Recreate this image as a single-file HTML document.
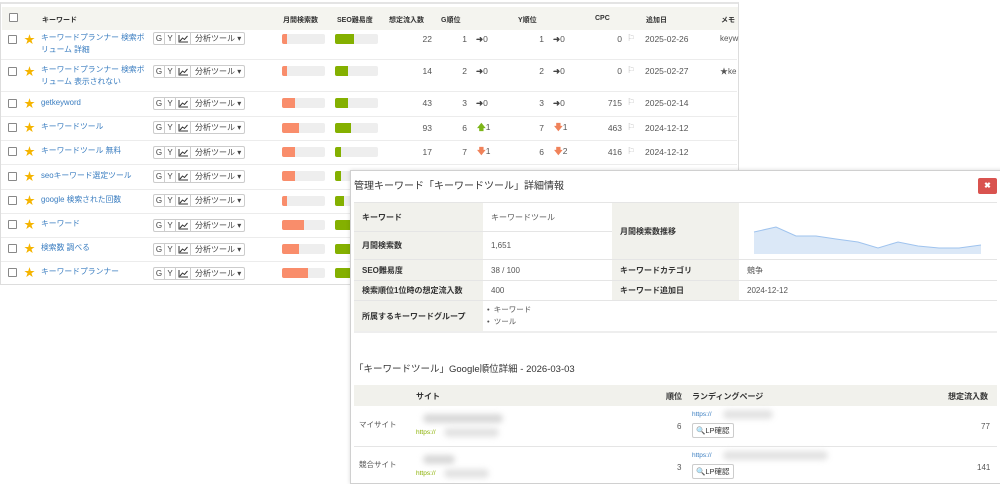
<!DOCTYPE html>
<html><head><meta charset="utf-8"><style>
*{box-sizing:border-box;margin:0;padding:0}
body{width:1000px;height:484px;background:#fff;position:relative;overflow:hidden;font-family:"Liberation Sans","Noto Sans CJK JP",sans-serif;font-size:8px;color:#555}
.a{position:absolute;white-space:nowrap}
.lp{position:absolute;left:0;top:2px;width:739px;height:283px;border:1px solid #ddd;border-top:2px solid #e4e4e4;background:#fff}
.hd{position:absolute;left:1px;top:3px;width:736px;height:23px;background:#f4f4ef}
.hd span{position:absolute;top:8px;font-size:7px;font-weight:bold;color:#333}
.row{position:absolute;left:1px;width:736px;border-bottom:1px solid #ececec}
.cb{position:absolute;left:8px;width:9px;height:9px;border:1px solid #888;border-radius:1px;background:#fff}
.st{position:absolute;left:24px;color:#f5b400;font-size:11px}
.kw{position:absolute;left:41px;color:#3a7dc0;font-size:7.8px;line-height:12px}
.btn{position:absolute;left:153px;height:13px;width:92px;border:1px solid #ccc;border-radius:2px;font-size:8px;color:#444;display:flex}
.btn i{font-style:normal;border-right:1px solid #ccc;display:block;text-align:center;line-height:11px}
.btn svg{display:block;margin:2px auto 0}
.bar{position:absolute;height:10px;width:43px;background:#eee;border-radius:2px;overflow:hidden}
.bar b{display:block;height:100%}
.n{position:absolute;text-align:right;width:40px;color:#555;font-size:8.5px}
.fl{position:absolute;left:627px;color:#bbb;font-size:9px}
.modal{position:absolute;left:350px;top:170px;width:660px;height:314px;background:#fff;border:1px solid #d0d0d0;box-shadow:0 0 4px rgba(0,0,0,.15)}
.lbl{position:absolute;background:#f1f1ec;font-weight:bold;color:#333;font-size:8px;padding-left:8px;display:flex;align-items:center}
.val{position:absolute;color:#555;font-size:8px;padding-left:8px;display:flex;align-items:center}
.blur{position:absolute;background:#d8d8d8;filter:blur(3px);border-radius:6px}
.lpb{position:absolute;border:1px solid #ccc;border-radius:2px;font-size:7.5px;color:#333;padding:1px 3px;background:#fff}
</style></head><body>
<div class="lp">
<div class="hd">
<div class="cb" style="top:6px;left:7px"></div>
<span style="left:40px">キーワード</span>
<span style="left:281px">月間検索数</span>
<span style="left:335px">SEO難易度</span>
<span style="left:387px">想定流入数</span>
<span style="left:439px">G順位</span>
<span style="left:516px">Y順位</span>
<span style="left:593px">CPC</span>
<span style="left:644px">追加日</span>
<span style="left:719px">メモ</span>
</div>
</div>

<div class="row" style="top:28px;height:32px"></div>
<div class="cb" style="top:35px"></div><div class="st" style="top:31px">★</div>
<div class="kw" style="top:32px">キーワードプランナー 検索ボ<br>リューム 詳細</div>
<div class="btn" style="top:32px"><i style="width:11px">G</i><i style="width:11px">Y</i><i style="width:15px"><svg width="10" height="8"><path d="M1 0V7H10M2 6L4.5 3 6.5 4.5 9.5 1" fill="none" stroke="#333" stroke-width="1"/></svg></i><span style="padding-left:4px;line-height:11px">分析ツール ▾</span></div>
<div class="bar" style="left:282px;top:34px"><b style="width:5px;background:#f98d6b"></b></div>
<div class="bar" style="left:335px;top:34px"><b style="width:19px;background:#84b000"></b></div>
<div class="n" style="left:392px;top:34px">22</div><div class="n" style="left:427px;top:34px">1</div><div class="a" style="left:476px;top:34px;font-size:8.5px"><b style="color:#444">➜</b>0</div>
<div class="n" style="left:504px;top:34px">1</div><div class="a" style="left:553px;top:34px;font-size:8.5px"><b style="color:#444">➜</b>0</div>
<div class="n" style="left:582px;top:34px">0</div><div class="fl" style="top:33px">⚐</div><div class="a" style="left:645px;top:34px;font-size:8.5px">2025-02-26</div><div class="a" style="left:720px;top:34px">keyw</div>

<div class="row" style="top:60px;height:32px"></div>
<div class="cb" style="top:67px"></div><div class="st" style="top:63px">★</div>
<div class="kw" style="top:64px">キーワードプランナー 検索ボ<br>リューム 表示されない</div>
<div class="btn" style="top:65px"><i style="width:11px">G</i><i style="width:11px">Y</i><i style="width:15px"><svg width="10" height="8"><path d="M1 0V7H10M2 6L4.5 3 6.5 4.5 9.5 1" fill="none" stroke="#333" stroke-width="1"/></svg></i><span style="padding-left:4px;line-height:11px">分析ツール ▾</span></div>
<div class="bar" style="left:282px;top:66px"><b style="width:5px;background:#f98d6b"></b></div>
<div class="bar" style="left:335px;top:66px"><b style="width:13px;background:#84b000"></b></div>
<div class="n" style="left:392px;top:66px">14</div><div class="n" style="left:427px;top:66px">2</div><div class="a" style="left:476px;top:66px;font-size:8.5px"><b style="color:#444">➜</b>0</div>
<div class="n" style="left:504px;top:66px">2</div><div class="a" style="left:553px;top:66px;font-size:8.5px"><b style="color:#444">➜</b>0</div>
<div class="n" style="left:582px;top:66px">0</div><div class="fl" style="top:65px">⚐</div><div class="a" style="left:645px;top:66px;font-size:8.5px">2025-02-27</div><div class="a" style="left:720px;top:66px">★ke</div>

<div class="row" style="top:92px;height:25px"></div>
<div class="cb" style="top:99px"></div><div class="st" style="top:95px">★</div>
<div class="kw" style="top:97px">getkeyword</div>
<div class="btn" style="top:97px"><i style="width:11px">G</i><i style="width:11px">Y</i><i style="width:15px"><svg width="10" height="8"><path d="M1 0V7H10M2 6L4.5 3 6.5 4.5 9.5 1" fill="none" stroke="#333" stroke-width="1"/></svg></i><span style="padding-left:4px;line-height:11px">分析ツール ▾</span></div>
<div class="bar" style="left:282px;top:98px"><b style="width:13px;background:#f98d6b"></b></div>
<div class="bar" style="left:335px;top:98px"><b style="width:13px;background:#84b000"></b></div>
<div class="n" style="left:392px;top:98px">43</div><div class="n" style="left:427px;top:98px">3</div><div class="a" style="left:476px;top:98px;font-size:8.5px"><b style="color:#444">➜</b>0</div>
<div class="n" style="left:504px;top:98px">3</div><div class="a" style="left:553px;top:98px;font-size:8.5px"><b style="color:#444">➜</b>0</div>
<div class="n" style="left:582px;top:98px">715</div><div class="fl" style="top:97px">⚐</div><div class="a" style="left:645px;top:98px;font-size:8.5px">2025-02-14</div>

<div class="row" style="top:117px;height:24px"></div>
<div class="cb" style="top:123px"></div><div class="st" style="top:119px">★</div>
<div class="kw" style="top:121px">キーワードツール</div>
<div class="btn" style="top:121px"><i style="width:11px">G</i><i style="width:11px">Y</i><i style="width:15px"><svg width="10" height="8"><path d="M1 0V7H10M2 6L4.5 3 6.5 4.5 9.5 1" fill="none" stroke="#333" stroke-width="1"/></svg></i><span style="padding-left:4px;line-height:11px">分析ツール ▾</span></div>
<div class="bar" style="left:282px;top:123px"><b style="width:17px;background:#f98d6b"></b></div>
<div class="bar" style="left:335px;top:123px"><b style="width:16px;background:#84b000"></b></div>
<div class="n" style="left:392px;top:123px">93</div><div class="n" style="left:427px;top:123px">6</div><div class="a" style="left:477px;top:122px;font-size:8.5px"><b style="color:#7cb518">🡅</b>1</div>
<div class="n" style="left:504px;top:123px">7</div><div class="a" style="left:554px;top:122px;font-size:8.5px"><b style="color:#f0825a">🡇</b>1</div>
<div class="n" style="left:582px;top:123px">463</div><div class="fl" style="top:122px">⚐</div><div class="a" style="left:645px;top:123px;font-size:8.5px">2024-12-12</div>

<div class="row" style="top:141px;height:24px"></div>
<div class="cb" style="top:147px"></div><div class="st" style="top:143px">★</div>
<div class="kw" style="top:145px">キーワードツール 無料</div>
<div class="btn" style="top:146px"><i style="width:11px">G</i><i style="width:11px">Y</i><i style="width:15px"><svg width="10" height="8"><path d="M1 0V7H10M2 6L4.5 3 6.5 4.5 9.5 1" fill="none" stroke="#333" stroke-width="1"/></svg></i><span style="padding-left:4px;line-height:11px">分析ツール ▾</span></div>
<div class="bar" style="left:282px;top:147px"><b style="width:13px;background:#f98d6b"></b></div>
<div class="bar" style="left:335px;top:147px"><b style="width:6px;background:#84b000"></b></div>
<div class="n" style="left:392px;top:147px">17</div><div class="n" style="left:427px;top:147px">7</div><div class="a" style="left:477px;top:146px;font-size:8.5px"><b style="color:#f0825a">🡇</b>1</div>
<div class="n" style="left:504px;top:147px">6</div><div class="a" style="left:554px;top:146px;font-size:8.5px"><b style="color:#f0825a">🡇</b>2</div>
<div class="n" style="left:582px;top:147px">416</div><div class="fl" style="top:146px">⚐</div><div class="a" style="left:645px;top:147px;font-size:8.5px">2024-12-12</div>

<div class="row" style="top:165px;height:25px"></div>
<div class="cb" style="top:172px"></div><div class="st" style="top:168px">★</div>
<div class="kw" style="top:170px">seoキーワード選定ツール</div>
<div class="btn" style="top:170px"><i style="width:11px">G</i><i style="width:11px">Y</i><i style="width:15px"><svg width="10" height="8"><path d="M1 0V7H10M2 6L4.5 3 6.5 4.5 9.5 1" fill="none" stroke="#333" stroke-width="1"/></svg></i><span style="padding-left:4px;line-height:11px">分析ツール ▾</span></div>
<div class="bar" style="left:282px;top:171px"><b style="width:13px;background:#f98d6b"></b></div>
<div class="bar" style="left:335px;top:171px"><b style="width:6px;background:#84b000"></b></div>

<div class="row" style="top:190px;height:24px"></div>
<div class="cb" style="top:196px"></div><div class="st" style="top:192px">★</div>
<div class="kw" style="top:194px">google 検索された回数</div>
<div class="btn" style="top:194px"><i style="width:11px">G</i><i style="width:11px">Y</i><i style="width:15px"><svg width="10" height="8"><path d="M1 0V7H10M2 6L4.5 3 6.5 4.5 9.5 1" fill="none" stroke="#333" stroke-width="1"/></svg></i><span style="padding-left:4px;line-height:11px">分析ツール ▾</span></div>
<div class="bar" style="left:282px;top:196px"><b style="width:5px;background:#f98d6b"></b></div>
<div class="bar" style="left:335px;top:196px"><b style="width:9px;background:#84b000"></b></div>

<div class="row" style="top:214px;height:24px"></div>
<div class="cb" style="top:220px"></div><div class="st" style="top:216px">★</div>
<div class="kw" style="top:218px">キーワード</div>
<div class="btn" style="top:219px"><i style="width:11px">G</i><i style="width:11px">Y</i><i style="width:15px"><svg width="10" height="8"><path d="M1 0V7H10M2 6L4.5 3 6.5 4.5 9.5 1" fill="none" stroke="#333" stroke-width="1"/></svg></i><span style="padding-left:4px;line-height:11px">分析ツール ▾</span></div>
<div class="bar" style="left:282px;top:220px"><b style="width:22px;background:#f98d6b"></b></div>
<div class="bar" style="left:335px;top:220px"><b style="width:15px;background:#84b000"></b></div>

<div class="row" style="top:238px;height:24px"></div>
<div class="cb" style="top:244px"></div><div class="st" style="top:240px">★</div>
<div class="kw" style="top:242px">検索数 調べる</div>
<div class="btn" style="top:243px"><i style="width:11px">G</i><i style="width:11px">Y</i><i style="width:15px"><svg width="10" height="8"><path d="M1 0V7H10M2 6L4.5 3 6.5 4.5 9.5 1" fill="none" stroke="#333" stroke-width="1"/></svg></i><span style="padding-left:4px;line-height:11px">分析ツール ▾</span></div>
<div class="bar" style="left:282px;top:244px"><b style="width:17px;background:#f98d6b"></b></div>
<div class="bar" style="left:335px;top:244px"><b style="width:15px;background:#84b000"></b></div>

<div class="cb" style="top:268px"></div><div class="st" style="top:264px">★</div>
<div class="kw" style="top:266px">キーワードプランナー</div>
<div class="btn" style="top:267px"><i style="width:11px">G</i><i style="width:11px">Y</i><i style="width:15px"><svg width="10" height="8"><path d="M1 0V7H10M2 6L4.5 3 6.5 4.5 9.5 1" fill="none" stroke="#333" stroke-width="1"/></svg></i><span style="padding-left:4px;line-height:11px">分析ツール ▾</span></div>
<div class="bar" style="left:282px;top:268px"><b style="width:26px;background:#f98d6b"></b></div>
<div class="bar" style="left:335px;top:268px"><b style="width:15px;background:#84b000"></b></div>

<div class="modal">
<div class="a" style="left:3px;top:6px;font-size:10px;color:#333">管理キーワード「キーワードツール」詳細情報</div>
<div class="a" style="left:627px;top:7px;width:19px;height:16px;background:#d9534f;border-radius:2px;color:#fff;font-size:8px;text-align:center;line-height:16px;font-weight:bold">✖</div>
<div class="a" style="left:3px;top:31px;width:643px;border-top:1px solid #e5e5e5"></div>
<div class="lbl" style="left:3px;top:32px;width:129px;height:28px">キーワード</div>
<div class="val" style="left:132px;top:32px;width:129px;height:28px">キーワードツール</div>
<div class="lbl" style="left:3px;top:61px;width:129px;height:27px">月間検索数</div>
<div class="val" style="left:132px;top:61px;width:129px;height:27px">1,651</div>
<div class="a" style="left:3px;top:60px;width:258px;border-top:1px solid #e5e5e5"></div>
<div class="lbl" style="left:261px;top:32px;width:127px;height:56px">月間検索数推移</div>
<svg class="a" style="left:388px;top:32px" width="258" height="56"><g transform="translate(-738,-202)"><polygon points="753,231 775,226 795,235 815,235 835,238 857,241 877,247 897,241 917,245 938,247 958,247 980,244 980,253 753,253" fill="#dbe8f7"/><polyline points="753,231 775,226 795,235 815,235 835,238 857,241 877,247 897,241 917,245 938,247 958,247 980,244" fill="none" stroke="#9fc3ee" stroke-width="1"/></g></svg>
<div class="a" style="left:3px;top:88px;width:643px;border-top:1px solid #e5e5e5"></div>
<div class="lbl" style="left:3px;top:89px;width:129px;height:20px">SEO難易度</div>
<div class="val" style="left:132px;top:89px;width:129px;height:20px">38 / 100</div>
<div class="lbl" style="left:261px;top:89px;width:127px;height:20px">キーワードカテゴリ</div>
<div class="val" style="left:388px;top:89px;width:258px;height:20px">競争</div>
<div class="a" style="left:3px;top:109px;width:643px;border-top:1px solid #e5e5e5"></div>
<div class="lbl" style="left:3px;top:110px;width:129px;height:19px">検索順位1位時の想定流入数</div>
<div class="val" style="left:132px;top:110px;width:129px;height:19px">400</div>
<div class="lbl" style="left:261px;top:110px;width:127px;height:19px">キーワード追加日</div>
<div class="val" style="left:388px;top:110px;width:258px;height:19px">2024-12-12</div>
<div class="a" style="left:3px;top:129px;width:643px;border-top:1px solid #e5e5e5"></div>
<div class="lbl" style="left:3px;top:130px;width:129px;height:30px">所属するキーワードグループ</div>
<div class="a" style="left:136px;top:133px;line-height:12px;font-size:7.5px">•&nbsp; キーワード<br>•&nbsp; ツール</div>
<div class="a" style="left:3px;top:160px;width:643px;border-top:2px solid #eee"></div>

<div class="a" style="left:3px;top:190px;font-size:9.5px;color:#333">「キーワードツール」Google順位詳細 - 2026-03-03</div>
<div class="a" style="left:3px;top:214px;width:643px;height:21px;background:#f1f1ec"></div>
<div class="a" style="left:65px;top:220px;font-weight:bold;color:#333;font-size:8px">サイト</div>
<div class="a" style="left:315px;top:220px;font-weight:bold;color:#333;font-size:8px">順位</div>
<div class="a" style="left:341px;top:220px;font-weight:bold;color:#333;font-size:8px">ランディングページ</div>
<div class="a" style="left:597px;top:220px;font-weight:bold;color:#333;font-size:8px">想定流入数</div>

<div class="a" style="left:8px;top:248px;font-size:7.5px">マイサイト</div>
<div class="blur" style="left:72px;top:243px;width:80px;height:9px"></div>
<div class="a" style="left:65px;top:258px;font-size:6.5px;color:#8ab000">https://</div>
<div class="blur" style="left:93px;top:257px;width:55px;height:9px;background:#e2e2e2"></div>
<div class="a" style="left:326px;top:251px;font-size:8px">6</div>
<div class="a" style="left:341px;top:240px;font-size:6.5px;color:#3a7dc0">https://</div>
<div class="blur" style="left:372px;top:239px;width:50px;height:9px;background:#e2e2e2"></div>
<div class="lpb" style="left:341px;top:252px">🔍LP確認</div>
<div class="a" style="left:630px;top:251px;font-size:8px">77</div>
<div class="a" style="left:3px;top:275px;width:643px;border-top:1px solid #e5e5e5"></div>

<div class="a" style="left:8px;top:288px;font-size:7.5px">競合サイト</div>
<div class="blur" style="left:72px;top:284px;width:32px;height:9px"></div>
<div class="a" style="left:65px;top:299px;font-size:6.5px;color:#8ab000">https://</div>
<div class="blur" style="left:93px;top:298px;width:45px;height:9px;background:#e2e2e2"></div>
<div class="a" style="left:326px;top:292px;font-size:8px">3</div>
<div class="a" style="left:341px;top:281px;font-size:6.5px;color:#3a7dc0">https://</div>
<div class="blur" style="left:372px;top:280px;width:105px;height:9px;background:#e2e2e2"></div>
<div class="lpb" style="left:341px;top:293px">🔍LP確認</div>
<div class="a" style="left:626px;top:292px;font-size:8px">141</div>
</div>
</body></html>
